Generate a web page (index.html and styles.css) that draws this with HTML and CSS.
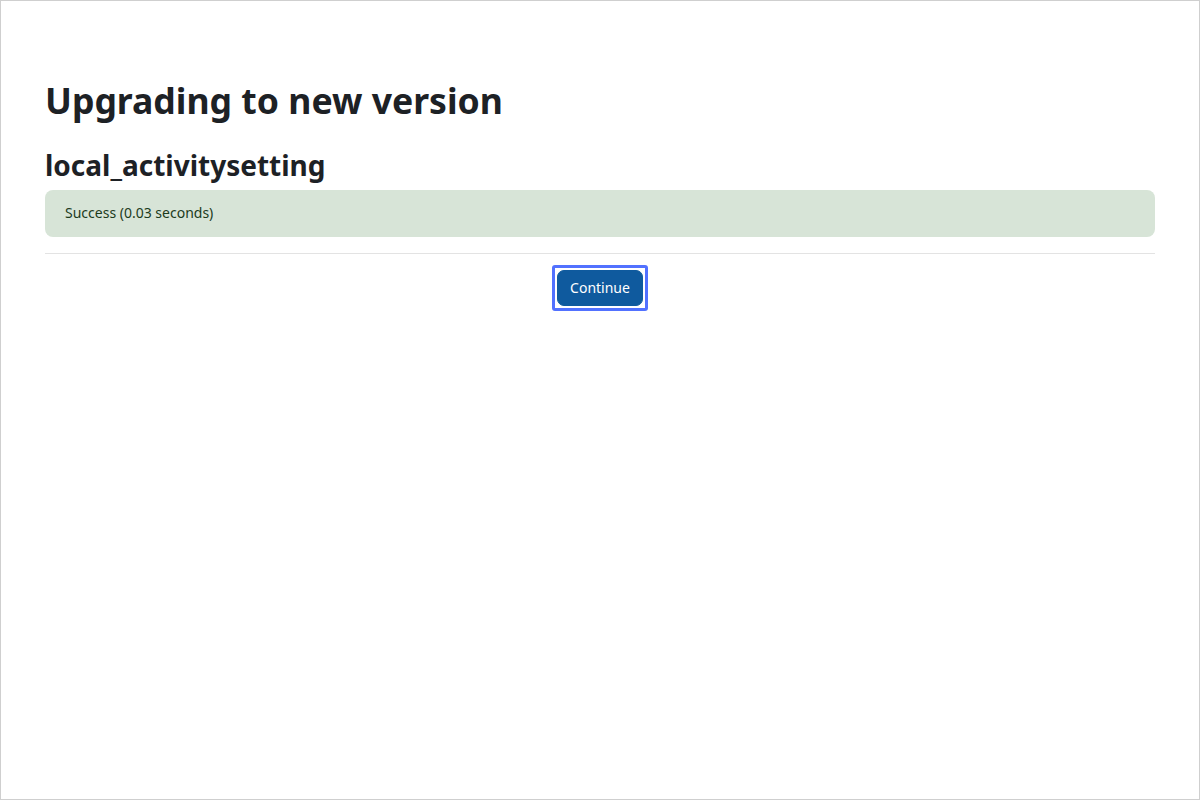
FILE: index.html
```html
<!DOCTYPE html>
<html lang="en">
<head>
  <meta charset="UTF-8" />
  <title>Upgrading to new version</title>
  <link rel="stylesheet" href="styles.css">
</head>
<body>
  <div class="page">
    <main class="content">
      <h1>Upgrading to new version</h1>
      <h2>local_activitysetting</h2>
      <div class="alert-success">Success (0.03 seconds)</div>
      <hr>
      <div class="continue-row">
        <span class="focus-ring">
          <button class="btn-primary">Continue</button>
        </span>
      </div>
    </main>
  </div>
</body>
</html>
```

FILE: styles.css
```css
* {
  margin: 0;
  padding: 0;
  box-sizing: border-box;
}

html, body {
  height: 100%;
  background: #fff;
  font-family: "Noto Sans", "Open Sans", sans-serif;
  color: #1d2125;
}

.page {
  height: 800px;
  border: 1px solid #cfcfcf;
}

.content {
  padding: 78px 44px 0 44px;
}

h1 {
  font-size: 35.6px;
  font-weight: 700;
  line-height: 1.2;
  margin-bottom: 27px;
}

h2 {
  font-size: 28px;
  font-weight: 700;
  line-height: 1.2;
  margin-bottom: 8px;
}

.alert-success {
  background: #d7e4d7;
  color: #1c3b1c;
  border-radius: 8px;
  padding: 12px 20px;
  font-size: 14px;
  line-height: 22.5px;
}

hr {
  border: none;
  border-top: 1px solid #e3e3e3;
  margin: 16px 0 11px 0;
}

.continue-row {
  display: flex;
  justify-content: center;
}

.focus-ring {
  display: flex;
  border: 3px solid #5271ff;
  border-radius: 3px;
  padding: 2px;
}

.btn-primary {
  background: #0f5a9e;
  color: #fff;
  border: 1px solid #0f5a9e;
  border-radius: 7px;
  padding: 6px 12px;
  font-family: inherit;
  font-size: 14px;
  line-height: 22.5px;
}
```
